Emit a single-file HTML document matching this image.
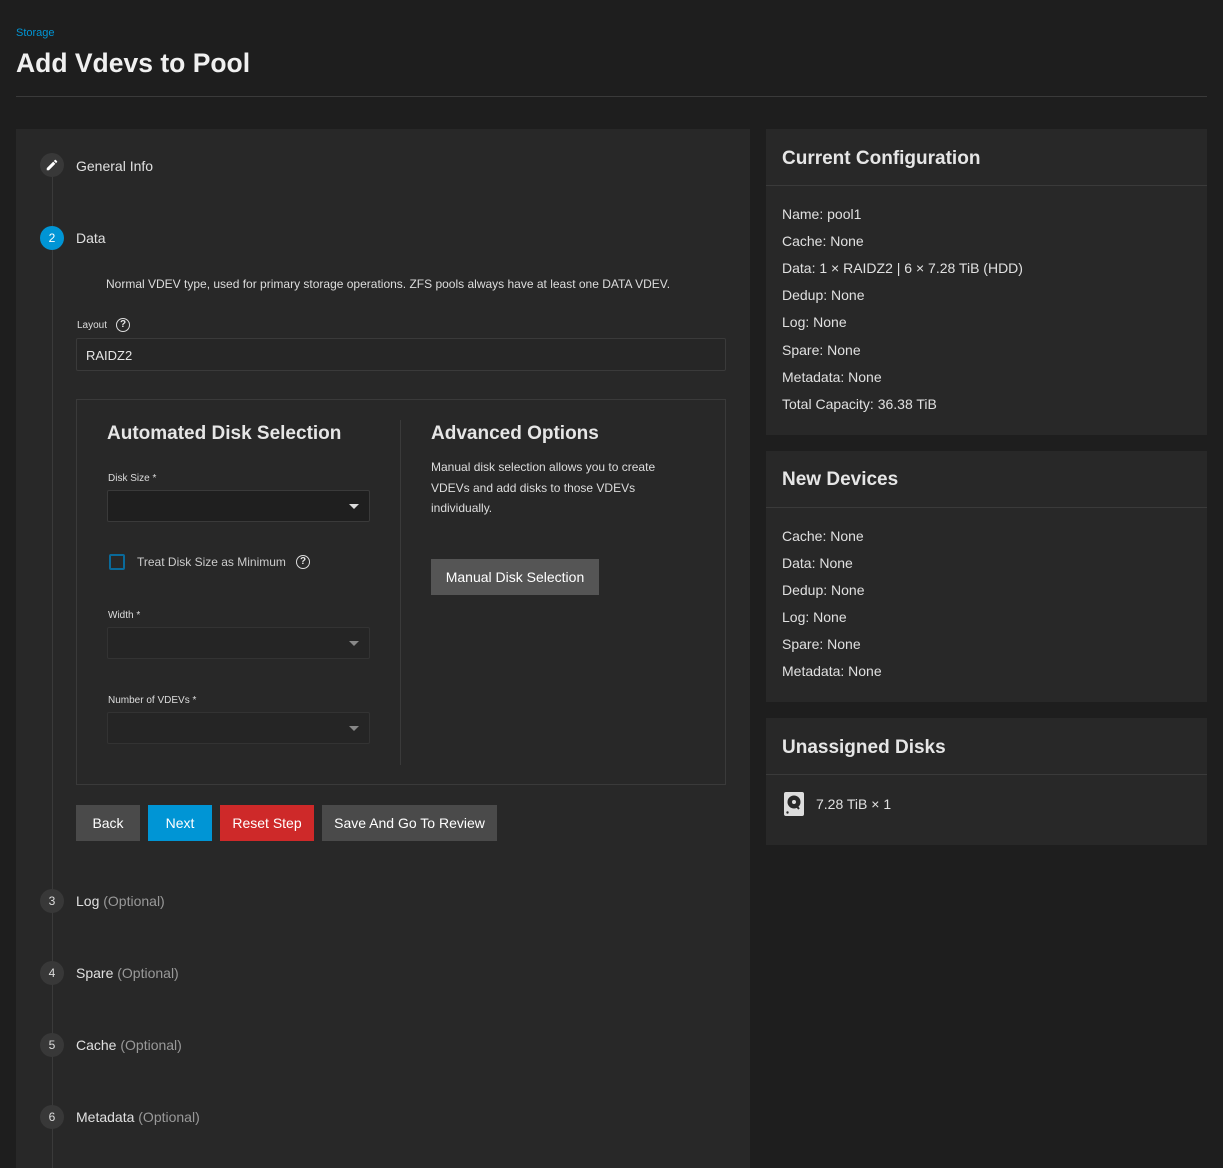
<!DOCTYPE html>
<html><head><style>
*{box-sizing:border-box;margin:0;padding:0}
body{width:1223px;height:1168px;background:#1e1e1e;color:#e6e6e6;font-family:"Liberation Sans",sans-serif;position:relative;overflow:hidden}
.a{position:absolute}
.card{position:absolute;background:#282828}
.t{font-size:14px;color:#e0e0e0}
.circ{position:absolute;left:40px;width:24px;height:24px;border-radius:50%;background:#383838;color:#ddd;font-size:12px;text-align:center;line-height:24px}
.h{font-size:19px;font-weight:bold;color:#e6e6e6}
.sel{position:absolute;background:#1f1f1f;border:1px solid #3a3a3a;border-radius:2px}
.tri{position:absolute;right:10px;top:13px;border-left:5px solid transparent;border-right:5px solid transparent;border-top:5px solid #ddd}
.lab{position:absolute;font-size:10px;color:#ddd}
.btn{position:absolute;top:805px;height:36px;line-height:36px;font-size:14px;color:#fff;text-align:center}
.row{position:absolute;left:782px;font-size:14px;color:#e0e0e0}
.hr{position:absolute;left:766px;width:441px;height:1px;background:#3a3a3a}
</style></head><body>
<div class="a" style="left:16px;top:27px;font-size:11px;color:#0095d5">Storage</div>
<div class="a" style="left:16px;top:48px;font-size:26.5px;font-weight:bold;color:#f0f0f0">Add Vdevs to Pool</div>
<div class="a" style="left:16px;top:96px;width:1191px;height:1px;background:#3a3a3a"></div>

<div class="card" style="left:16px;top:129px;width:734px;height:1039px"></div>
<div class="a" style="left:52px;top:177px;width:1px;height:991px;background:#3a3a3a"></div>
<div class="circ" style="top:153px"><svg width="14" height="14" viewBox="0 0 24 24" style="margin-top:5px"><path fill="#fff" d="M3 17.25V21h3.75L17.81 9.94l-3.75-3.75L3 17.25zM20.71 7.04a1 1 0 000-1.41l-2.34-2.34a1 1 0 00-1.41 0l-1.83 1.83 3.75 3.75 1.83-1.83z"/></svg></div>
<div class="a t" style="left:76px;top:158px">General Info</div>
<div class="circ" style="top:226px;background:#0095d5;color:#fff">2</div>
<div class="a t" style="left:76px;top:230px">Data</div>
<div class="a" style="left:106px;top:277px;font-size:12px;color:#ddd">Normal VDEV type, used for primary storage operations. ZFS pools always have at least one DATA VDEV.</div>
<div class="lab" style="left:77px;top:320px">Layout</div>
<div class="a" style="left:116px;top:318px;width:14px;height:14px;border:1.5px solid #ddd;border-radius:50%;font-size:10px;text-align:center;line-height:11px;font-weight:bold">?</div>
<div class="sel" style="left:76px;top:338px;width:650px;height:33px;background:#262626"><span class="a" style="left:9px;top:9px;font-size:13px">RAIDZ2</span></div>

<div class="a" style="left:76px;top:399px;width:650px;height:386px;border:1px solid #3a3a3a"></div>
<div class="a" style="left:400px;top:420px;width:1px;height:345px;background:#3a3a3a"></div>
<div class="a h" style="left:107px;top:423px">Automated Disk Selection</div>
<div class="lab" style="left:108px;top:473px">Disk Size *</div>
<div class="sel" style="left:107px;top:490px;width:263px;height:32px"><div class="tri"></div></div>
<div class="a" style="left:109px;top:554px;width:16px;height:16px;border:2px solid #0a6a9a;border-radius:2px"></div>
<div class="a" style="left:137px;top:555px;font-size:12px;color:#ccc">Treat Disk Size as Minimum</div>
<div class="a" style="left:296px;top:555px;width:14px;height:14px;border:1.5px solid #ddd;border-radius:50%;font-size:10px;text-align:center;line-height:11px;font-weight:bold">?</div>
<div class="lab" style="left:108px;top:610px">Width *</div>
<div class="sel" style="left:107px;top:627px;width:263px;height:32px;background:#252525;border-color:#333"><div class="tri" style="border-top-color:#888"></div></div>
<div class="lab" style="left:108px;top:695px">Number of VDEVs *</div>
<div class="sel" style="left:107px;top:712px;width:263px;height:32px;background:#252525;border-color:#333"><div class="tri" style="border-top-color:#888"></div></div>

<div class="a h" style="left:431px;top:423px">Advanced Options</div>
<div class="a" style="left:431px;top:457px;font-size:12px;line-height:20.5px;color:#ddd;width:260px">Manual disk selection allows you to create VDEVs and add disks to those VDEVs individually.</div>
<div class="a" style="left:431px;top:559px;width:168px;height:36px;background:#555;color:#fff;font-size:14px;text-align:center;line-height:36px">Manual Disk Selection</div>

<div class="btn" style="left:76px;width:64px;background:#4a4a4a">Back</div>
<div class="btn" style="left:148px;width:64px;background:#0095d5">Next</div>
<div class="btn" style="left:220px;width:94px;background:#ce2929">Reset Step</div>
<div class="btn" style="left:322px;width:175px;background:#4a4a4a">Save And Go To Review</div>

<div class="circ" style="top:889px">3</div><div class="a t" style="left:76px;top:893px">Log <span style="color:#999">(Optional)</span></div>
<div class="circ" style="top:961px">4</div><div class="a t" style="left:76px;top:965px">Spare <span style="color:#999">(Optional)</span></div>
<div class="circ" style="top:1033px">5</div><div class="a t" style="left:76px;top:1037px">Cache <span style="color:#999">(Optional)</span></div>
<div class="circ" style="top:1105px">6</div><div class="a t" style="left:76px;top:1109px">Metadata <span style="color:#999">(Optional)</span></div>

<div class="card" style="left:766px;top:129px;width:441px;height:306px"></div>
<div class="a h" style="left:782px;top:148px">Current Configuration</div>
<div class="hr" style="top:185px"></div>
<div class="row" style="top:206px">Name: pool1</div>
<div class="row" style="top:233px">Cache: None</div>
<div class="row" style="top:260px">Data: 1 × RAIDZ2 | 6 × 7.28 TiB (HDD)</div>
<div class="row" style="top:287px">Dedup: None</div>
<div class="row" style="top:314px">Log: None</div>
<div class="row" style="top:342px">Spare: None</div>
<div class="row" style="top:369px">Metadata: None</div>
<div class="row" style="top:396px">Total Capacity: 36.38 TiB</div>

<div class="card" style="left:766px;top:451px;width:441px;height:251px"></div>
<div class="a h" style="left:782px;top:469px">New Devices</div>
<div class="hr" style="top:507px"></div>
<div class="row" style="top:528px">Cache: None</div>
<div class="row" style="top:555px">Data: None</div>
<div class="row" style="top:582px">Dedup: None</div>
<div class="row" style="top:609px">Log: None</div>
<div class="row" style="top:636px">Spare: None</div>
<div class="row" style="top:663px">Metadata: None</div>

<div class="card" style="left:766px;top:718px;width:441px;height:127px"></div>
<div class="a h" style="left:782px;top:737px">Unassigned Disks</div>
<div class="hr" style="top:774px"></div>
<svg class="a" style="left:784px;top:792px" width="20" height="24" viewBox="0 0 20 24"><rect x="0" y="0" width="20" height="24" rx="2" fill="#ddd"/><circle cx="10" cy="10" r="6.5" fill="#282828"/><circle cx="10" cy="10" r="2" fill="#ddd"/><path d="M11 12l4 5" stroke="#282828" stroke-width="2"/><circle cx="3.5" cy="20.5" r="1.2" fill="#282828"/></svg>
<div class="row" style="left:816px;top:796px">7.28 TiB × 1</div>
</body></html>
